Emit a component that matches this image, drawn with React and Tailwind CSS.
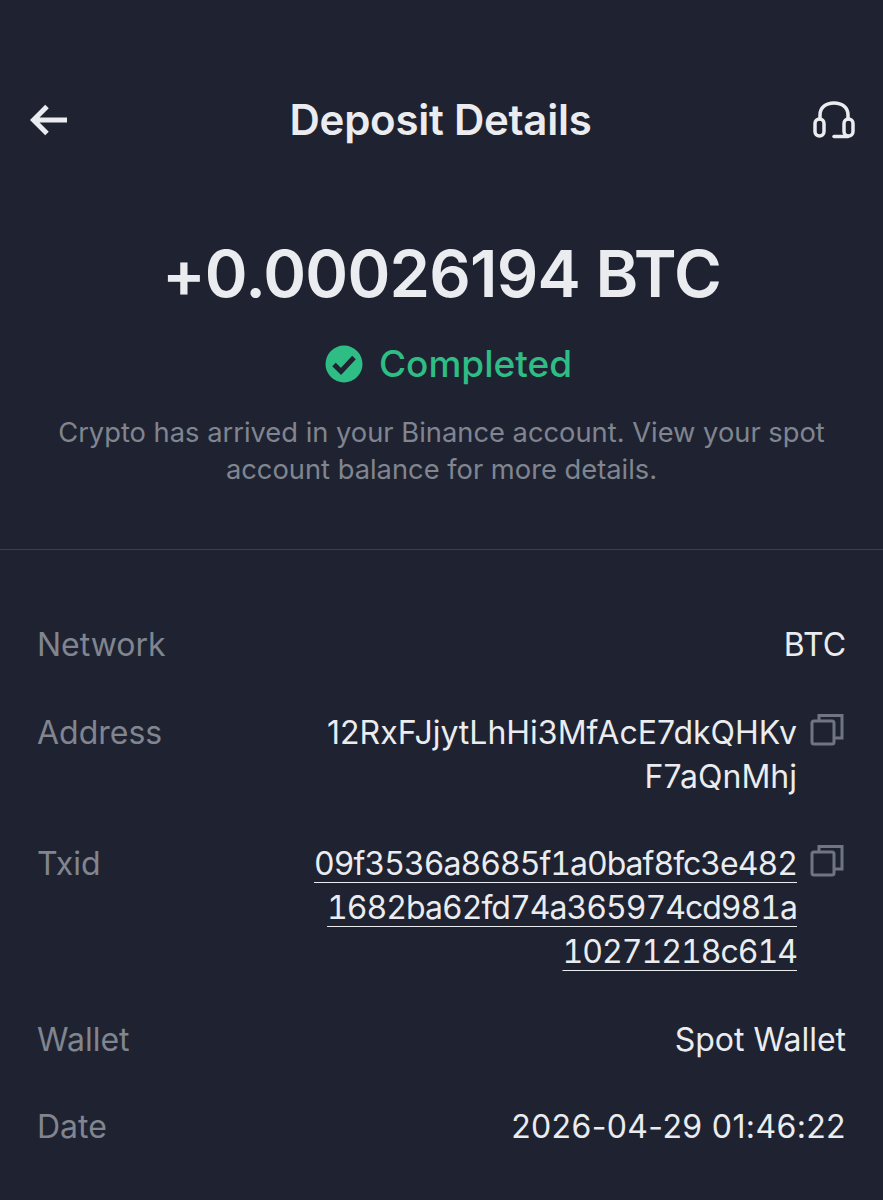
// Deposit details screen
const rows = [
  { label: 'Network', lines: ['BTC'] },
  { label: 'Address', lines: ['12RxFJjytLhHi3MfAcE7dkQHKv', 'F7aQnMhj'], copy: true },
  { label: 'Txid', lines: ['09f3536a8685f1a0baf8fc3e482', '1682ba62fd74a365974cd981a', '10271218c614'], copy: true, textClass: 'tabular-nums tracking-[-1px] underline underline-offset-[7px] decoration-1' },
  { label: 'Wallet', lines: ['Spot Wallet'] },
  { label: 'Date', lines: ['2026-04-29 01:46:22'], textClass: 'tracking-[0.37px]' },
];

function CopyIcon() {
  return (
    <svg width="36" height="34" viewBox="0 0 36 34" fill="none" stroke="#6f7682" strokeWidth="3" className="shrink-0 mt-[2px]">
      <rect x="2" y="8" width="22" height="23" rx="2" />
      <path d="M9 8V2.5h23V25h-8" />
    </svg>
  );
}

export default function App() {
  return (
    <div className="h-[1200px] overflow-hidden bg-[#1f2331] font-['Inter',sans-serif] text-[#eaecef]">
      {/* header */}
      <div className="flex items-center justify-between pt-[96px] pl-[30px] pr-[28px] h-[144px]">
        <svg width="38" height="32" viewBox="0 0 38 32" fill="none" stroke="#eaecef" strokeWidth="5">
          <path d="M37 16H4M17 2.5 3.5 16 17 29.5" />
        </svg>
        <h1 className="text-[42px] leading-[48px] font-semibold tracking-[-0.25px]">Deposit Details</h1>
        <svg width="42" height="38" viewBox="0 0 42 38" fill="none" stroke="#eaecef" strokeWidth="3.5" strokeLinecap="round">
          <path d="M7 18V14C7 6.500 13 2 21 2s14 4.500 14 12v4" />
          <rect x="2" y="18" width="9" height="17" rx="4.500" />
          <rect x="31" y="18" width="9" height="17" rx="4.500" />
          <path d="M21 35.500h14" />
        </svg>
      </div>

      {/* amount */}
      <div className="flex flex-col items-center pt-[91px] px-[40px] pb-[61px] border-b border-[#3a404d]">
        <div className="text-[65px] leading-[78px] font-semibold tracking-[-0.8px]">+0.00026194 BTC</div>
        <div className="flex items-center gap-[16px] mt-[29px] h-[44px] pl-[14px]">
          <svg width="38" height="38" viewBox="0 0 38 38">
            <circle cx="19" cy="19" r="18.5" fill="#2ebd85" />
            <path d="M9 19.500l7 7L29 12.500" fill="none" stroke="#1f2331" strokeWidth="5" />
          </svg>
          <span className="text-[37px] leading-[44px] font-medium text-[#2ebd85]">Completed</span>
        </div>
        <p className="mt-[28px] text-center text-[27.3px] leading-[37px] text-[#80858f]">
          Crypto has arrived in your Binance account. View your spot
          <br />
          account balance for more details.
        </p>
      </div>

      {/* rows */}
      <div className="flex flex-col gap-[43.5px] pt-[73px] pl-[37px] pr-[37px]">
        {rows.map((r) => (
          <div key={r.label} className="flex justify-between items-start">
            <span className="text-[32px] leading-[44px] text-[#80858f]">{r.label}</span>
            <div className="flex items-start gap-[13px]">
              <div className="flex flex-col items-end text-[32px] leading-[44px]">
                {r.lines.map((l) => (
                  <span key={l} className={r.textClass}>{l}</span>
                ))}
              </div>
              {r.copy && <CopyIcon />}
            </div>
          </div>
        ))}
      </div>
    </div>
  );
}
